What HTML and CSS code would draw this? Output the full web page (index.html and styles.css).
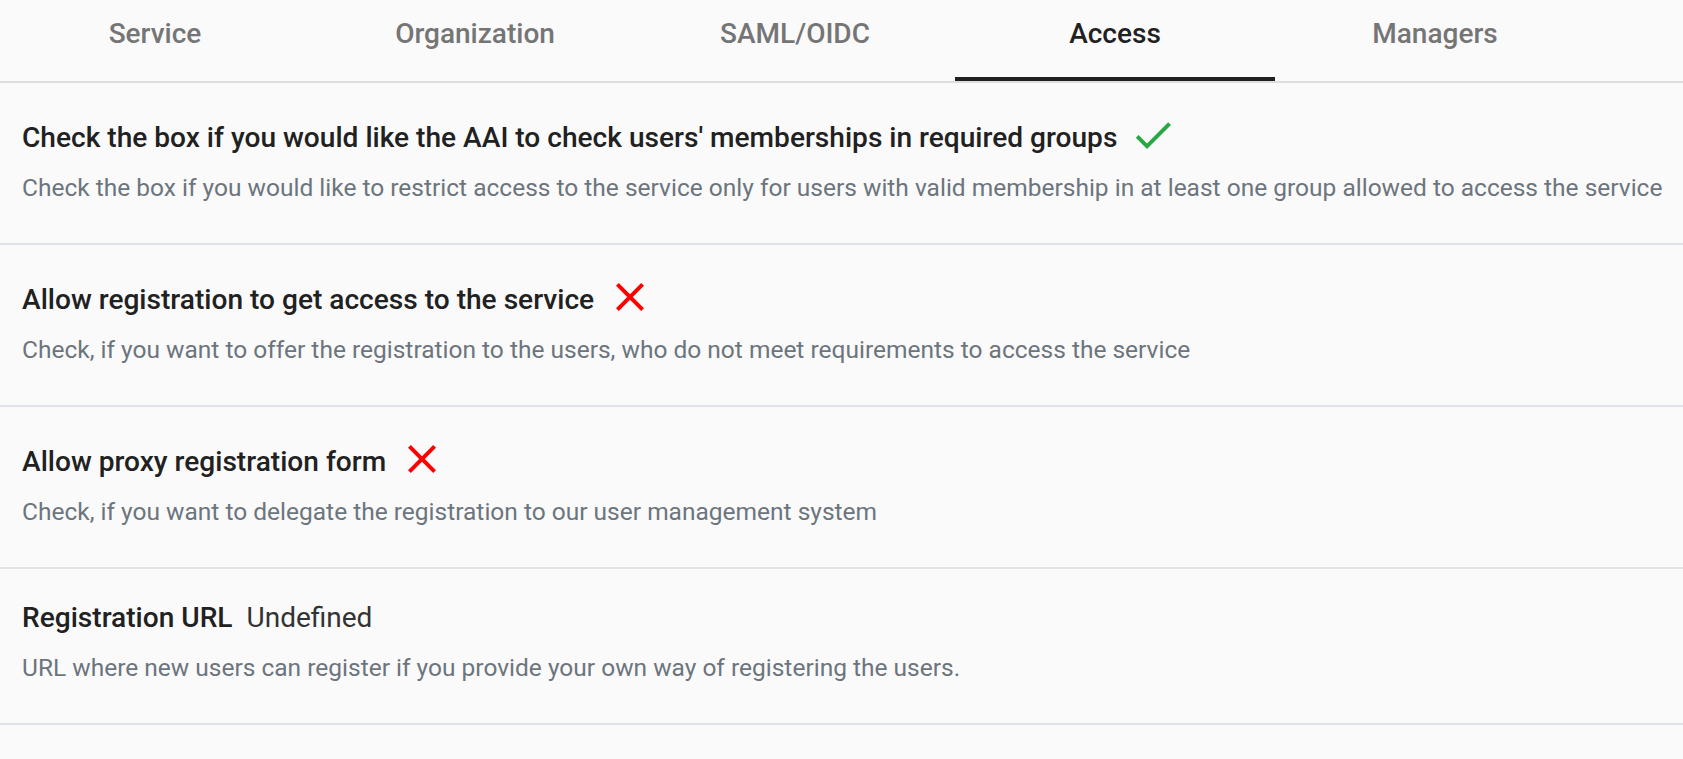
FILE: index.html
```html
<!DOCTYPE html>
<html lang="en">
<head>
<meta charset="utf-8">
<title>Access</title>
<link rel="stylesheet" href="styles.css">
</head>
<body>
<div class="page">
  <nav class="tabs">
    <div class="tab">Service</div>
    <div class="tab">Organization</div>
    <div class="tab">SAML/OIDC</div>
    <div class="tab active">Access</div>
    <div class="tab">Managers</div>
  </nav>
  <section class="rows">
    <div class="row">
      <div class="row-head">
        <span class="row-title">Check the box if you would like the AAI to check users' memberships in required groups</span>
        <svg class="icon icon-ok" viewBox="0 0 24 24" width="48" height="48"><path d="M9 16.2L4.8 12l-1.4 1.4L9 19 21 7l-1.4-1.4L9 16.2z"/></svg>
      </div>
      <div class="row-desc">Check the box if you would like to restrict access to the service only for users with valid membership in at least one group allowed to access the service</div>
    </div>
    <div class="row">
      <div class="row-head">
        <span class="row-title">Allow registration to get access to the service</span>
        <svg class="icon icon-no" viewBox="0 0 24 24" width="48" height="48"><path d="M19 6.41L17.59 5 12 10.59 6.41 5 5 6.41 10.59 12 5 17.59 6.41 19 12 13.41 17.59 19 19 17.59 13.41 12z"/></svg>
      </div>
      <div class="row-desc">Check, if you want to offer the registration to the users, who do not meet requirements to access the service</div>
    </div>
    <div class="row">
      <div class="row-head">
        <span class="row-title">Allow proxy registration form</span>
        <svg class="icon icon-no" viewBox="0 0 24 24" width="48" height="48"><path d="M19 6.41L17.59 5 12 10.59 6.41 5 5 6.41 10.59 12 5 17.59 6.41 19 12 13.41 17.59 19 19 17.59 13.41 12z"/></svg>
      </div>
      <div class="row-desc">Check, if you want to delegate the registration to our user management system</div>
    </div>
    <div class="row">
      <div class="row-head">
        <span class="row-title">Registration URL</span>
        <span class="row-value">Undefined</span>
      </div>
      <div class="row-desc">URL where new users can register if you provide your own way of registering the users.</div>
    </div>
  </section>
</div>
</body>
</html>
```

FILE: styles.css
```css
* {
  box-sizing: border-box;
}

html, body {
  margin: 0;
  padding: 0;
  background: #fafafa;
}

body {
  font-family: Roboto, "Noto Sans", sans-serif;
  color: #212121;
  overflow: hidden;
}

.page {
  width: 100%;
}

.tabs {
  display: flex;
  border-bottom: 2px solid #dddddd;
  margin-left: -5px;
}

.tab {
  width: 320px;
  height: 81px;
  padding-top: 13px;
  text-align: center;
  font-size: 28px;
  font-weight: 500;
  line-height: 42px;
  color: #757575;
  border-bottom: 4px solid transparent;
}

.tab.active {
  color: #212121;
  border-bottom-color: #212121;
}

.row {
  padding: 27.5px 0 39.5px 22px;
  border-bottom: 2px solid #e0e3e7;
}

.row-head {
  display: flex;
  align-items: flex-end;
  gap: 12px;
}

.row-title {
  font-size: 28.1px;
  font-weight: 500;
  line-height: 42px;
  color: #212121;
}

.row-value {
  font-size: 28px;
  font-weight: 400;
  line-height: 42px;
  color: #333333;
  margin-left: 2px;
}

.icon {
  flex: 0 0 auto;
  display: block;
}

.icon-ok {
  fill: #28a745;
}

.icon-no {
  fill: #ff0000;
}

.row-desc {
  margin-top: 13px;
  font-size: 24.5px;
  line-height: 32px;
  color: #6c757d;
  white-space: nowrap;
}
```
